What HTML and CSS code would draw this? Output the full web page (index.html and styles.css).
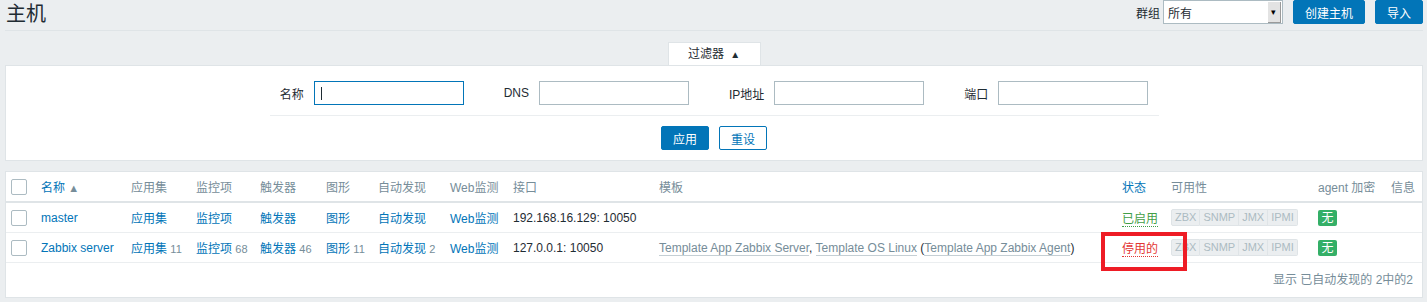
FILE: index.html
```html
<!DOCTYPE html>
<html lang="zh-CN">
<head>
    <meta charset="UTF-8">
    <title>主机</title>
    <link rel="stylesheet" href="styles.css">
</head>
<body>
    <div class="page">
        <div class="header">
            <h1>主机</h1>
            <div class="header-controls">
                <label class="group-label">群组</label>
                <div class="select-box">
                    <span class="select-value">所有</span>
                    <span class="select-arrow">&#9662;</span>
                </div>
                <button class="btn">创建主机</button>
                <button class="btn">导入</button>
            </div>
        </div>

        <div class="filter-tabs">
            <div class="filter-tab">过滤器 <span class="tab-arrow">&#9650;</span></div>
        </div>
        <div class="filter-panel">
            <div class="filter-row">
                <label>名称</label>
                <input type="text" class="field focused">
                <label>DNS</label>
                <input type="text" class="field">
                <label>IP地址</label>
                <input type="text" class="field">
                <label>端口</label>
                <input type="text" class="field">
            </div>
            <div class="filter-buttons">
                <button class="btn">应用</button>
                <button class="btn btn-alt">重设</button>
            </div>
        </div>

        <div class="list-panel">
            <table class="list-table">
                <colgroup>
                    <col class="c-check"><col class="c-name"><col class="c-apps"><col class="c-items">
                    <col class="c-triggers"><col class="c-graphs"><col class="c-disc"><col class="c-web">
                    <col class="c-iface"><col class="c-tpl"><col class="c-status"><col class="c-avail">
                    <col class="c-enc"><col class="c-info">
                </colgroup>
                <thead>
                    <tr>
                        <th><span class="checkbox"></span></th>
                        <th><a class="link">名称</a> <span class="sort-up">&#9650;</span></th>
                        <th>应用集</th>
                        <th>监控项</th>
                        <th>触发器</th>
                        <th>图形</th>
                        <th>自动发现</th>
                        <th>Web监测</th>
                        <th>接口</th>
                        <th>模板</th>
                        <th><a class="link">状态</a></th>
                        <th>可用性</th>
                        <th>agent 加密</th>
                        <th>信息</th>
                    </tr>
                </thead>
                <tbody>
                    <tr>
                        <td><span class="checkbox"></span></td>
                        <td><a class="link">master</a></td>
                        <td><a class="link">应用集</a></td>
                        <td><a class="link">监控项</a></td>
                        <td><a class="link">触发器</a></td>
                        <td><a class="link">图形</a></td>
                        <td><a class="link">自动发现</a></td>
                        <td><a class="link">Web监测</a></td>
                        <td>192.168.16.129: 10050</td>
                        <td></td>
                        <td><a class="status-on">已启用</a></td>
                        <td>
                            <span class="avail"><span>ZBX</span><span>SNMP</span><span>JMX</span><span>IPMI</span></span>
                        </td>
                        <td><span class="enc">无</span></td>
                        <td></td>
                    </tr>
                    <tr>
                        <td><span class="checkbox"></span></td>
                        <td><a class="link">Zabbix server</a></td>
                        <td><a class="link">应用集</a> <sup class="count">11</sup></td>
                        <td><a class="link">监控项</a> <sup class="count">68</sup></td>
                        <td><a class="link">触发器</a> <sup class="count">46</sup></td>
                        <td><a class="link">图形</a> <sup class="count">11</sup></td>
                        <td><a class="link">自动发现</a> <sup class="count">2</sup></td>
                        <td><a class="link">Web监测</a></td>
                        <td>127.0.0.1: 10050</td>
                        <td><a class="tpl">Template App Zabbix Server</a>, <a class="tpl">Template OS Linux</a> (<a class="tpl">Template App Zabbix Agent</a>)</td>
                        <td><a class="status-off">停用的</a></td>
                        <td>
                            <span class="avail"><span>ZBX</span><span>SNMP</span><span>JMX</span><span>IPMI</span></span>
                        </td>
                        <td><span class="enc">无</span></td>
                        <td></td>
                    </tr>
                </tbody>
            </table>
            <div class="table-stats">显示 已自动发现的 2中的2</div>
        </div>
    </div>

    <!-- red box drawn over the screenshot -->
    <div class="mark"></div>
</body>
</html>
```

FILE: styles.css
```css
body {
    margin: 0;
    padding: 0;
    background-color: #ebeef0;
    font-family: "Liberation Sans", Arial, "Noto Sans CJK SC", sans-serif;
    font-size: 12px;
    color: #1f2c33;
}
.page {
    padding: 0 4px 0 5px;
}
.header {
    display: flex;
    justify-content: space-between;
    align-items: flex-start;
    height: 30px;
    border-bottom: 1px solid #dfe4e7;
}
.header h1 {
    margin: 1px 0 0 1px;
    font-size: 20px;
    font-weight: normal;
    line-height: 26px;
}
.header-controls {
    display: flex;
    align-items: center;
    height: 24px;
}
.group-label {
    margin-right: 3px;
}
.select-box {
    display: flex;
    justify-content: space-between;
    align-items: center;
    box-sizing: border-box;
    width: 120px;
    height: 24px;
    background: #fff;
    border: 1px solid #acbbc2;
    margin-right: 10px;
}
.select-value {
    padding-left: 4px;
}
.select-arrow {
    width: 12px;
    height: 20px;
    margin-right: 1px;
    background: #e3e3e3;
    border-right: 1px solid #9a9a9a;
    border-bottom: 1px solid #9a9a9a;
    font-size: 9px;
    line-height: 20px;
    text-align: center;
    color: #000;
}
.btn {
    height: 24px;
    padding: 0 11px;
    margin-left: 10px;
    background-color: #0275b8;
    border: 1px solid #0275b8;
    border-radius: 2px;
    color: #fff;
    font-family: inherit;
    font-size: 12px;
}
.header-controls .btn:first-of-type {
    margin-left: 0;
}
.btn-alt {
    background-color: #fff;
    color: #0275b8;
}
.filter-tabs {
    display: flex;
    justify-content: center;
    margin-top: 11px;
}
.filter-tab {
    width: 93px;
    height: 23px;
    box-sizing: border-box;
    background: #fff;
    border: 1px solid #dfe4e7;
    border-bottom: none;
    text-align: center;
    line-height: 23px;
}
.tab-arrow {
    font-size: 10px;
    margin-left: 3px;
}
.filter-panel {
    background: #fff;
    border: 1px solid #dfe4e7;
    padding: 15px 0 10px;
}
.filter-row {
    display: flex;
    justify-content: center;
    align-items: center;
    width: 889px;
    margin: 0 auto;
    padding-bottom: 10px;
    border-bottom: 1px solid #ebeef0;
}
.filter-row label {
    margin: 0 10px 0 40px;
}
.filter-row label:first-child {
    margin-left: 0;
}
.field {
    box-sizing: border-box;
    width: 150px;
    height: 24px;
    border: 1px solid #acbbc2;
    margin: 0;
    padding: 0 5px;
}
.field.focused {
    border-color: #0275b8;
    background: linear-gradient(#1f2c33, #1f2c33) no-repeat 6px 5px / 1px 13px;
}
.filter-buttons {
    display: flex;
    justify-content: center;
    padding-top: 10px;
}
.filter-buttons .btn:first-child {
    margin-left: 0;
}
.list-panel {
    margin-top: 10px;
    background: #fff;
    border: 1px solid #dfe4e7;
}
.list-table {
    width: 100%;
    table-layout: fixed;
    border-collapse: collapse;
}
.c-check { width: 30px; }
.c-name { width: 90px; }
.c-apps { width: 65px; }
.c-items { width: 64px; }
.c-triggers { width: 66px; }
.c-graphs { width: 52px; }
.c-disc { width: 72px; }
.c-web { width: 63px; }
.c-iface { width: 146px; }
.c-tpl { width: 463px; }
.c-status { width: 49px; }
.c-avail { width: 147px; }
.c-enc { width: 73px; }
.c-info { width: 36px; }
.list-table th {
    height: 29px;
    padding: 0 5px;
    text-align: left;
    font-weight: normal;
    color: #768d99;
    border-bottom: 2px solid #dfe4e7;
    white-space: nowrap;
}
.list-table td {
    height: 29px;
    padding: 0 5px;
    border-bottom: 1px solid #ebeef0;
    white-space: nowrap;
}
.checkbox {
    display: block;
    box-sizing: border-box;
    width: 16px;
    height: 16px;
    border: 1px solid #acbbc2;
    border-radius: 2px;
}
.link {
    color: #0275b8;
}
.sort-up {
    font-size: 11px;
    color: #768d99;
}
.count {
    color: #768d99;
    font-size: 11px;
    vertical-align: baseline;
}
.tpl {
    color: #768d99;
    border-bottom: 1px solid #c5cfd4;
}
.status-on {
    color: #429e47;
    border-bottom: 1px dotted #429e47;
}
.status-off {
    color: #e33734;
    border-bottom: 1px dotted #e33734;
}
.avail {
    display: inline-flex;
}
.avail span {
    padding: 0 3px;
    height: 15px;
    line-height: 15px;
    background: #ebeef0;
    color: #acbbc2;
    border: 1px solid #dfe4e7;
    border-left: none;
    font-size: 11px;
}
.avail span:first-child {
    border-left: 1px solid #dfe4e7;
    border-radius: 2px 0 0 2px;
}
.avail span:last-child {
    border-radius: 0 2px 2px 0;
}
.enc {
    display: inline-block;
    width: 19px;
    height: 16px;
    line-height: 16px;
    text-align: center;
    background: #34af67;
    color: #fff;
    border-radius: 2px;
}
.table-stats {
    text-align: right;
    color: #768d99;
    padding: 10px 9px 10px;
    line-height: 14px;
}
.mark {
    position: absolute;
    left: 1101px;
    top: 232px;
    width: 78px;
    height: 31px;
    border: 4px solid #ee1c25;
}
```
